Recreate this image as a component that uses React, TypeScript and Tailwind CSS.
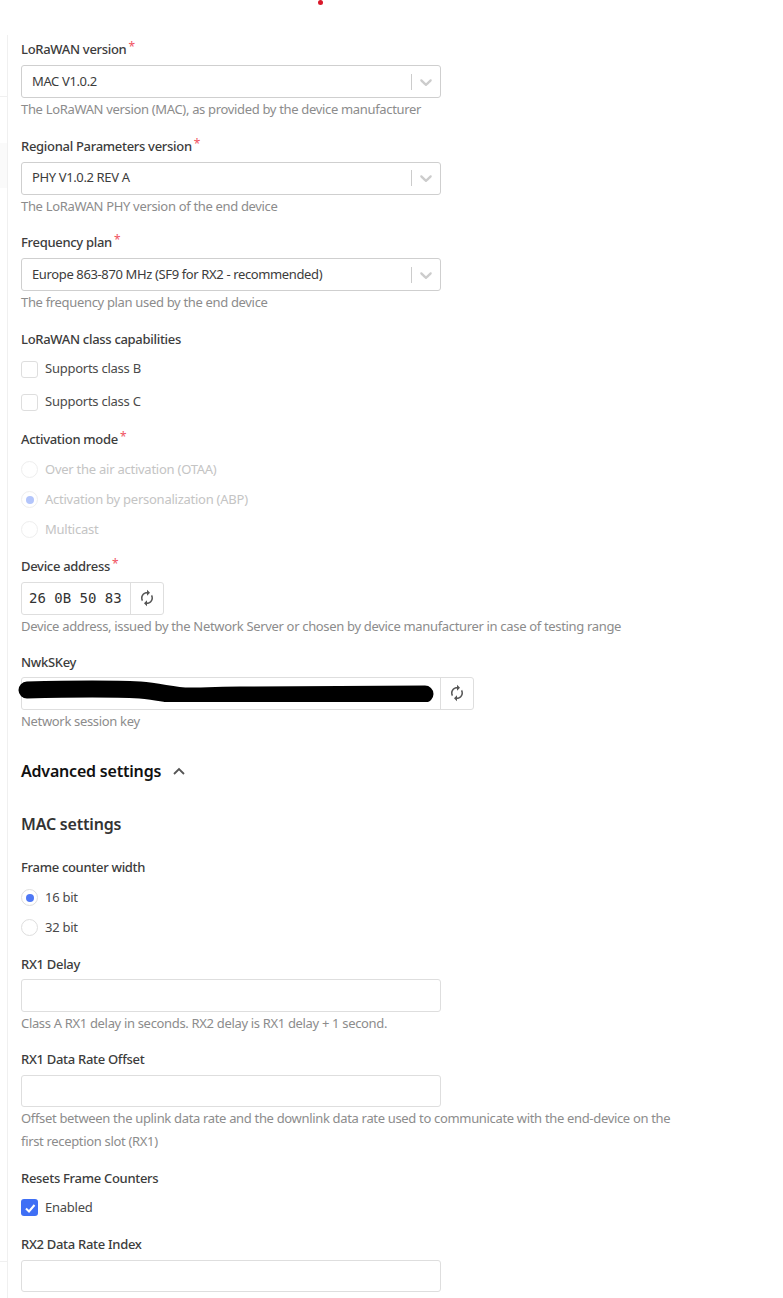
import { MdAutorenew } from 'react-icons/md';

const labelCls = 'block text-[13px] leading-[20px] font-medium tracking-[-0.3px] text-[#3c3c3c]';
const helpCls = 'text-[13px] leading-[22px] tracking-[-0.33px] text-[#8c8c8c]';

function Label({ text, required }: { text: string; required?: boolean }) {
  return (
    <div className={labelCls}>
      {text}
      {required && <span className="relative -top-[3px] ml-[2px] text-[12px] font-normal leading-none text-[#f0525f]">*</span>}
    </div>
  );
}

function Chevron() {
  return (
    <svg viewBox="0 0 20 20" className="h-[20px] w-[20px] fill-[#cccccc]">
      <path d="M4.516 7.548c0.436-0.446 1.043-0.481 1.576 0l3.908 3.747 3.908-3.747c0.533-0.481 1.141-0.446 1.574 0 0.436 0.445 0.408 1.197 0 1.615-0.406 0.418-4.695 4.502-4.695 4.502-0.217 0.223-0.502 0.335-0.787 0.335s-0.57-0.112-0.789-0.335c0 0-4.287-4.084-4.695-4.502s-0.436-1.17 0-1.615z" />
    </svg>
  );
}

function SelectField({ label, value, help }: { label: string; value: string; help: string }) {
  return (
    <div className="mb-[15.5px]">
      <Label text={label} required />
      <div className="mt-[6px] flex h-[33px] w-[420px] items-center rounded-[3px] border border-[#cfcfcf] bg-white pl-[10px] pr-[4px] text-[13px] tracking-[-0.37px] text-[#3c3c3c]">
        <span className="flex-1">{value}</span>
        <span className="mr-[4px] h-[16px] w-px bg-[#cccccc]" />
        <Chevron />
      </div>
      <div className={helpCls}>{help}</div>
    </div>
  );
}

function Box() {
  return <span className="h-[17px] w-[17px] rounded-[3px] border border-[#dedede] bg-white" />;
}

function Radio({ checked, faded }: { checked?: boolean; faded?: boolean }) {
  return (
    <span className={`flex h-[17px] w-[17px] items-center justify-center rounded-full border ${faded ? 'border-[#eeeeee]' : 'border-[#dedede]'}`}>
      {checked && <span className={`h-[8px] w-[8px] rounded-full ${faded ? 'bg-[#b3c5fb]' : 'bg-[#4f78f5]'}`} />}
    </span>
  );
}

function Option({ icon, text, faded, rowCls }: { icon: React.ReactNode; text: string; faded?: boolean; rowCls: string }) {
  return (
    <div className={`flex items-center gap-[7px] text-[13px] tracking-[-0.25px] ${rowCls} ${faded ? 'text-[#c4c4c4]' : 'text-[#4a4a4a]'}`}>
      {icon}
      <span>{text}</span>
    </div>
  );
}

function TextField({ label, help }: { label: string; help?: string[] }) {
  return (
    <div className="mb-[15.5px]">
      <Label text={label} />
      <div className="mt-[5.5px] h-[32.5px] w-[420px] rounded-[3px] border border-[#dedede] bg-white" />
      {help?.map((line, i) => (
        <div key={line} className={`${helpCls} ${i > 0 ? 'mt-px' : ''}`}>{line}</div>
      ))}
    </div>
  );
}

function RefreshButton() {
  return (
    <div className="flex h-full w-[33px] items-center justify-center border-l border-[#dedede] text-[#555555]">
      <MdAutorenew size={18} />
    </div>
  );
}

export default function App() {
  return (
    <div className="relative flex h-[1298px] w-[783px] overflow-hidden bg-white font-['Noto_Sans',sans-serif] tracking-[-0.2px]">
      <span className="absolute left-[318px] top-0 h-[5px] w-[5px] rounded-full bg-[#d9182a]" />

      {/* sidebar remnants */}
      <div className="w-[7px] shrink-0">
        <div className="mt-[96px] h-px bg-[#f0f0f0]" />
        <div className="mt-[46px] h-[45px] bg-[#fafafa]" />
        <div className="mt-[1073px] h-px bg-[#f0f0f0]" />
      </div>

      <div className="mt-[35px] flex-1 border-l border-[#f0f0f0] pl-[13px] pt-[4px]">
        <SelectField label="LoRaWAN version" value="MAC V1.0.2" help="The LoRaWAN version (MAC), as provided by the device manufacturer" />
        <SelectField label="Regional Parameters version" value="PHY V1.0.2 REV A" help="The LoRaWAN PHY version of the end device" />
        <SelectField label="Frequency plan" value="Europe 863-870 MHz (SF9 for RX2 - recommended)" help="The frequency plan used by the end device" />

        <div className="mb-[10px]">
          <Label text="LoRaWAN class capabilities" />
          <div className="mt-[4px]">
            <Option icon={<Box />} text="Supports class B" rowCls="h-[33px]" />
            <Option icon={<Box />} text="Supports class C" rowCls="h-[33px]" />
          </div>
        </div>

        <div className="mb-[11px]">
          <Label text="Activation mode" required />
          <div className="mt-[6px]">
            <Option faded icon={<Radio faded />} text="Over the air activation (OTAA)" rowCls="h-[30px]" />
            <Option faded icon={<Radio faded checked />} text="Activation by personalization (ABP)" rowCls="h-[30px]" />
            <Option faded icon={<Radio faded />} text="Multicast" rowCls="h-[30px]" />
          </div>
        </div>

        <div className="mb-[15px]">
          <Label text="Device address" required />
          <div className="mt-[6px] flex h-[33px] w-[143px] items-center rounded-[3px] border border-[#dedede]">
            <span className="flex-1 pl-[7px] font-['DejaVu_Sans_Mono',monospace] text-[14px] tracking-normal text-[#333333]">26 0B 50 83</span>
            <RefreshButton />
          </div>
          <div className={helpCls}>Device address, issued by the Network Server or chosen by device manufacturer in case of testing range</div>
        </div>

        <div className="relative mb-[27px]">
          <Label text="NwkSKey" />
          <div className="mt-[5px] flex h-[33px] w-[453px] items-center justify-end rounded-[3px] border border-[#dedede]">
            <RefreshButton />
          </div>
          <svg className="absolute -left-[3px] top-[20px] h-[30px] w-[418px]" viewBox="0 0 418 30">
            <path d="M9 18 C50 17 100 17 122 18 C145 20 155 24 172 24 C190 24 205 23 222 23 C280 23 340 22 407 22" fill="none" stroke="#000000" strokeWidth="17" strokeLinecap="round" />
          </svg>
          <div className={helpCls}>Network session key</div>
        </div>

        <div className="flex h-[24px] items-center gap-[12px] text-[16px] font-semibold text-[#111111]">
          <span>Advanced settings</span>
          <svg viewBox="0 0 12 8" className="h-[8px] w-[12px] fill-none stroke-[#555555] stroke-[1.8]">
            <path d="M1 7 L6 2 L11 7" />
          </svg>
        </div>

        <div className="mb-[21px] mt-[29px] h-[24px] text-[16px] font-semibold leading-[24px] text-[#333333]">MAC settings</div>

        <div className="mb-[11px]">
          <Label text="Frame counter width" />
          <div className="mt-[6px]">
            <Option icon={<Radio checked />} text="16 bit" rowCls="h-[30px]" />
            <Option icon={<Radio />} text="32 bit" rowCls="h-[30px]" />
          </div>
        </div>

        <TextField label="RX1 Delay" help={['Class A RX1 delay in seconds. RX2 delay is RX1 delay + 1 second.']} />
        <div className="w-[680px]">
          <TextField label="RX1 Data Rate Offset" help={['Offset between the uplink data rate and the downlink data rate used to communicate with the end-device on the', 'first reception slot (RX1)']} />
        </div>

        <div className="mb-[11.5px]">
          <Label text="Resets Frame Counters" />
          <div className="mt-[5px]">
            <Option
              icon={
                <span className="flex h-[17px] w-[17px] items-center justify-center rounded-[3px] bg-[#3f6ff5]">
                  <svg viewBox="0 0 12 12" className="h-[12px] w-[12px] fill-none stroke-white stroke-[2]">
                    <path d="M2 6.5 L5 9.5 L10.5 3" />
                  </svg>
                </span>
              }
              text="Enabled"
              rowCls="h-[30px]"
            />
          </div>
        </div>

        <TextField label="RX2 Data Rate Index" />
      </div>
    </div>
  );
}
